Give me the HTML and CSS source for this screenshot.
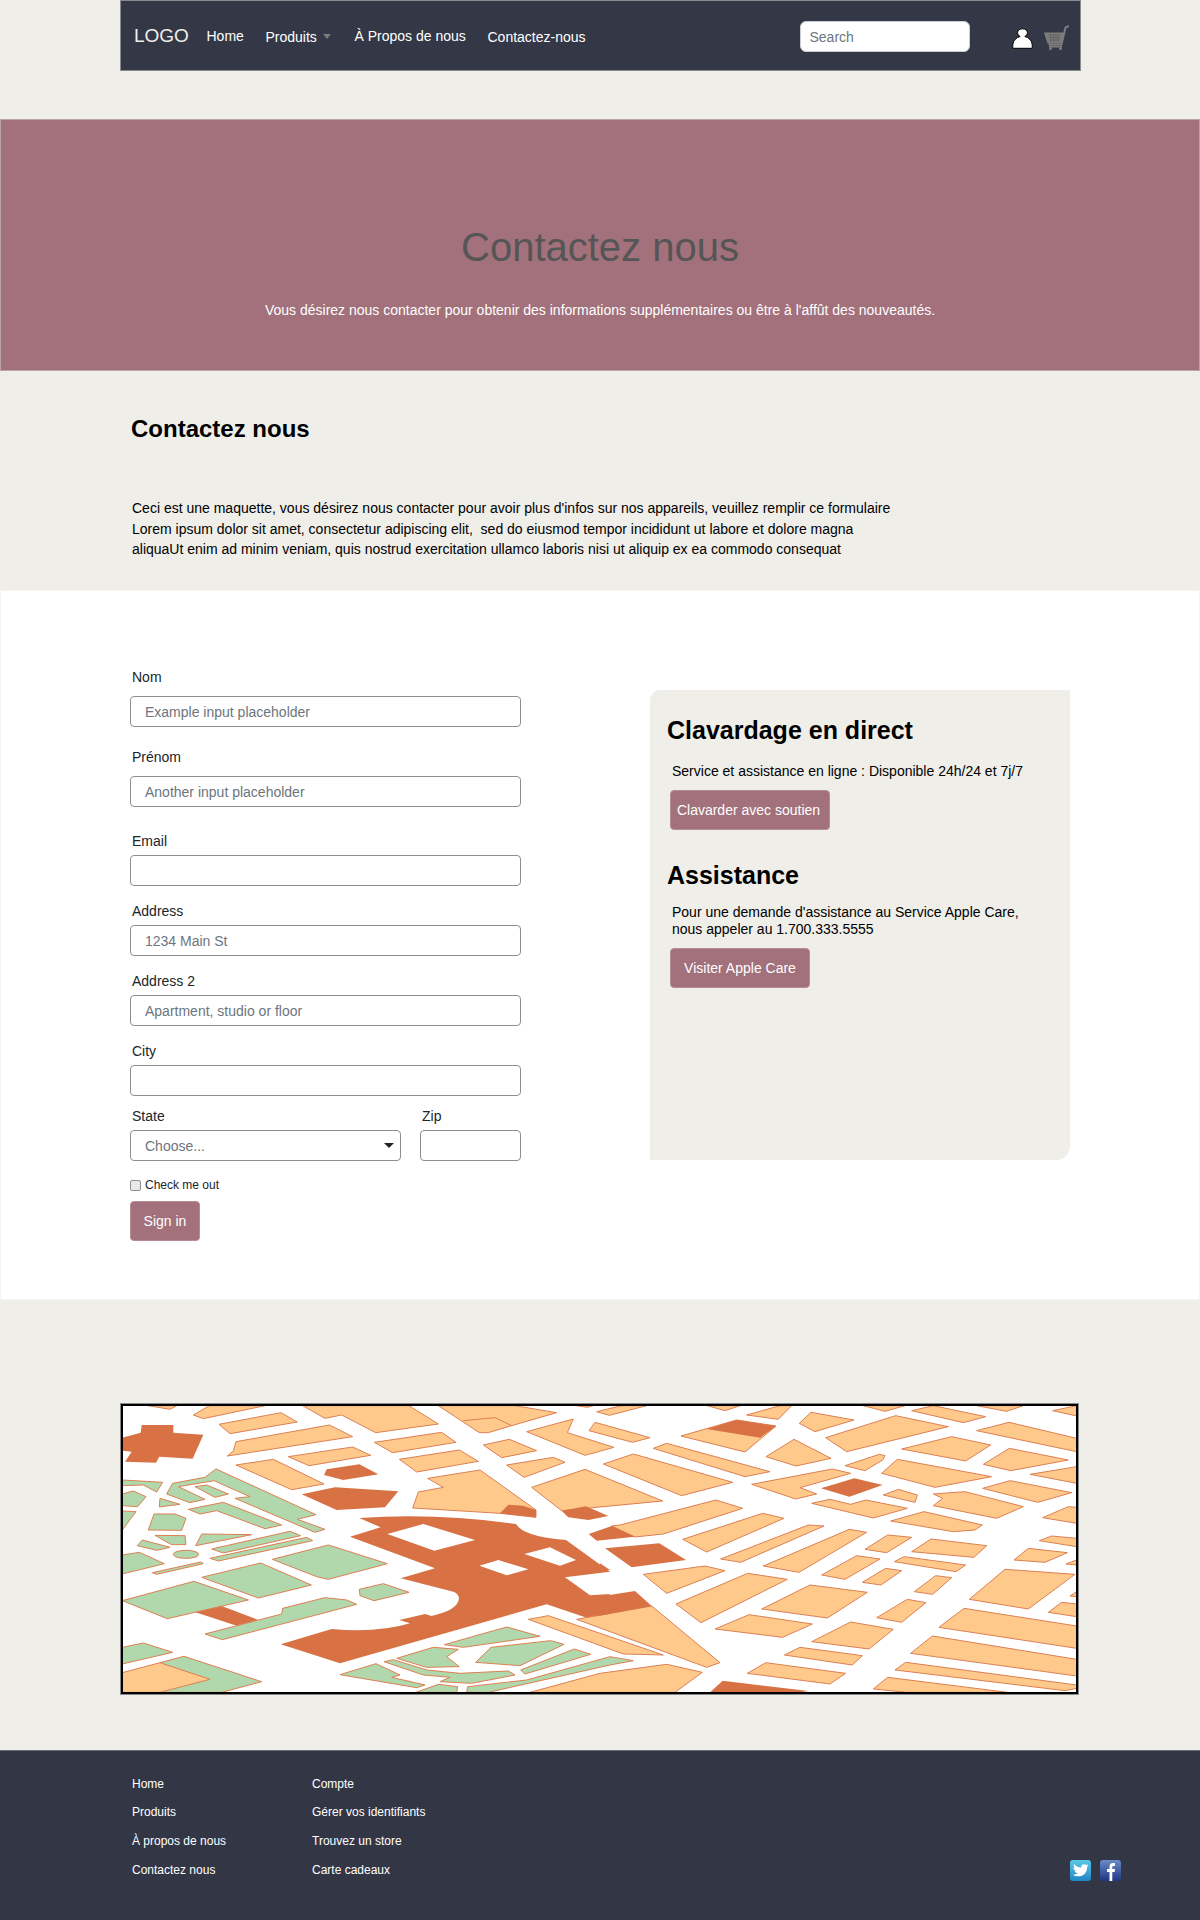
FILE: index.html
```html
<!DOCTYPE html>
<html lang="fr">
<head>
<meta charset="utf-8">
<title>Contactez nous</title>
<link rel="stylesheet" href="styles.css">
</head>
<body>
<header class="nav">
  <a class="logo">LOGO</a>
  <a class="link link-home">Home</a>
  <a class="link link-prod">Produits<span class="caret"></span></a>
  <a class="link link-about">À Propos de nous</a>
  <a class="link link-contact">Contactez-nous</a>
  <input class="search" type="text" placeholder="Search">
  <svg class="user" viewBox="0 0 21 21" width="21" height="21"><path d="M10.5 .8c3 0 4.900 1.600 4.900 3.900 0 1.800-1.100 3.100-2.600 3.800 3.900 1 6.800 3.600 7.300 7.500.2 1.500.2 3.100.1 4.300H.8C.7 19.100.7 17.500.9 16c.5-3.900 3.400-6.500 7.300-7.500C6.700 7.800 5.600 6.500 5.600 4.700 5.600 2.400 7.500 .8 10.500 .8z" fill="#fff" stroke="#000" stroke-width="1"/></svg>
  <svg class="cart" viewBox="0 0 25 25" width="25" height="25"><path d="M25 1l-3.500 1.500-4 17H4.500" fill="none" stroke="#7d7d7d" stroke-width="2"/><path d="M0 7.500h20L17 18.500H3.500z" fill="#7d7d7d"/><path d="M4 10h13M4.500 12.500h12M5 15h11M7 9v8M9.500 9v8M12 9v8M14.500 9v8" stroke="#5c5c5c" stroke-width=".7"/><path d="M5 21.500h13" stroke="#7d7d7d" stroke-width="2"/><circle cx="6.500" cy="23.500" r="1.500" fill="#7d7d7d"/><circle cx="16.500" cy="23.500" r="1.500" fill="#7d7d7d"/></svg>
</header>

<section class="hero">
  <h1 class="hero-title">Contactez nous</h1>
  <p class="hero-sub">Vous désirez nous contacter pour obtenir des informations supplémentaires ou être à l'affût des nouveautés.</p>
</section>

<section class="intro">
  <h2 class="intro-title">Contactez nous</h2>
  <p class="intro-text">Ceci est une maquette, vous désirez nous contacter pour avoir plus d'infos sur nos appareils, veuillez remplir ce formulaire<br>Lorem ipsum dolor sit amet, consectetur adipiscing elit,&nbsp; sed do eiusmod tempor incididunt ut labore et dolore magna<br>aliquaUt enim ad minim veniam, quis nostrud exercitation ullamco laboris nisi ut aliquip ex ea commodo consequat</p>
</section>

<section class="contact">
  <form class="form">
    <div class="field field-a"><label>Nom</label><input class="input" placeholder="Example input placeholder"></div>
    <div class="field field-b"><label>Prénom</label><input class="input" placeholder="Another input placeholder"></div>
    <div class="field"><label>Email</label><input class="input"></div>
    <div class="field"><label>Address</label><input class="input" placeholder="1234 Main St"></div>
    <div class="field"><label>Address 2</label><input class="input" placeholder="Apartment, studio or floor"></div>
    <div class="field field-c"><label>City</label><input class="input"></div>
    <div class="row">
      <div class="field state"><label>State</label><div class="select"><span>Choose...</span><i class="arrow"></i></div></div>
      <div class="field zip"><label>Zip</label><input class="input"></div>
    </div>
    <div class="check"><span class="box"></span><span>Check me out</span></div>
    <button class="btn btn-sign" type="button">Sign in</button>
  </form>
  <aside class="panel">
    <h3 class="panel-title">Clavardage en direct</h3>
    <p class="panel-text">Service et assistance en ligne : Disponible 24h/24 et 7j/7</p>
    <button class="btn btn-chat" type="button">Clavarder avec soutien</button>
    <h3 class="panel-title panel-second">Assistance</h3>
    <p class="panel-text panel-text-2">Pour une demande d'assistance au Service Apple Care,<br>nous appeler au 1.700.333.5555</p>
    <button class="btn btn-care" type="button">Visiter Apple Care</button>
  </aside>
</section>

<section class="map-wrap">
  <svg class="map" viewBox="123 1406 953 286" preserveAspectRatio="none">
    <g transform="translate(110 1390) scale(.33333)">
      <g class="o">
        <polygon points="115,47 180,58 200,47"/>
        <polygon points="250,75 280,86 465,47 298,47"/>
        <polygon points="327,103 513,68 562,96 360,131"/>
        <polygon points="578,47 645,85 695,75 797,128 985,102 897,47"/>
        <polygon points="352,198 370,183 378,155 658,105 728,140"/>
        <polygon points="535,200 728,171 782,196 597,227"/>
        <polygon points="793,157 995,127 1038,157 848,188"/>
        <polygon points="868,208 1048,180 1105,214 920,246"/>
        <polygon points="985,47 1108,128 1135,128 1205,107 1340,68 1215,47"/>
        <polyline points="1060,92 1155,83 1205,107"/>
        <polygon points="1120,165 1198,148 1280,182 1175,203"/>
        <polygon points="1190,225 1330,202 1365,217 1242,262"/>
        <polygon points="1400,47 1432,52 1450,47"/>
        <polygon points="378,225 490,208 642,282 545,299"/>
        <polygon points="908,354 925,306 1000,292 953,265 1110,240 1278,360 1278,382 1170,370"/>
      </g>
      <g class="d">
        <polygon points="1170,370 1195,344 1240,347 1278,360 1278,382"/>
        <polygon points="37,143 92,128 95,105 190,105 190,128 280,134 248,206 148,200 138,218 45,215 65,185 37,182"/>
        <polygon points="642,255 650,238 748,223 805,253 700,270"/>
        <polygon points="575,313 675,292 865,304 825,352 680,360"/>
        <polygon points="252,665 335,648 445,690 380,707"/>
        <path fill-rule="evenodd" d="M748,384 Q980,368 1218,402 Q1240,440 1368,450 L1500,545 L1500,680 L1430,683 L1310,643 L690,820 L512,763 L665,717 Q800,730 900,700 L868,690 L945,672 L965,678 Q1045,660 1047,625 Q1045,610 1030,605 L872,565 L975,535 L720,440 L812,412 Z M832,432 L940,402 L1095,450 L973,482 Z M1108,527 L1165,510 L1255,538 L1190,556 Z M1243,492 L1320,472 L1398,510 L1350,527 Z M1365,562 L1500,545 L1500,612 L1440,616 Z"/>
      </g>
      <g class="g">
        <polygon points="37,270 158,277 140,306 100,285 37,287"/>
        <polygon points="37,312 70,303 108,320 83,350 37,347"/>
        <polygon points="37,363 78,365 37,420"/>
        <polygon points="150,325 210,343 148,351"/>
        <polygon points="170,312 188,280 285,262 318,237 618,374 562,388 645,418 615,427 375,325 420,320 312,272 205,290 285,328 240,338"/>
        <polygon points="255,290 290,285 355,312 315,322"/>
        <polygon points="235,358 340,337 515,405 465,416 320,362 270,372"/>
        <polygon points="115,420 132,372 195,372 228,385 215,421"/>
        <polygon points="135,436 225,437 228,464 185,464"/>
        <polygon points="82,467 97,450 180,472 140,481"/>
        <polygon points="257,467 275,432 425,434"/>
        <polygon points="305,477 540,424 572,437 340,489"/>
        <polygon points="300,505 590,442 608,452 325,513"/>
        <ellipse cx="228" cy="493" rx="38" ry="12"/>
        <polygon points="37,495 88,487 163,521 37,552"/>
        <polygon points="127,548 272,516 280,521 140,553"/>
        <polygon points="275,562 452,519 604,585 445,624"/>
        <polygon points="487,508 655,465 832,521 655,568 620,560"/>
        <polygon points="37,632 252,574 415,630 172,686"/>
        <polygon points="285,732 515,672 518,655 645,623 710,630 740,643 337,749"/>
        <polygon points="748,598 820,581 897,607 792,632 750,617"/>
        <polygon points="37,772 100,759 188,787 37,822"/>
        <polygon points="150,818 222,799 455,875 335,907 150,907"/>
        <polygon points="690,854 798,821 870,855 845,862 945,885 920,893"/>
        <polygon points="860,805 970,772 1045,778 1010,800 1048,830 950,832"/>
        <polygon points="822,815 850,809 950,840 1050,850 1195,843 1215,855 1085,880 990,875 1020,862 940,855"/>
        <polygon points="1003,764 1190,711 1290,739 1060,772"/>
        <polygon points="1097,817 1143,772 1322,752 1362,763 1230,827"/>
        <polygon points="1232,840 1393,777 1442,793 1245,852"/>
        <polygon points="1070,907 1073,890 1250,870 1500,800 1570,812 1500,825 1135,907"/>
        <polygon points="918,907 985,883 1043,890 1040,907"/>
      </g>
      <g class="o"><polygon points="37,848 150,818 300,868 150,907 37,907"/></g>
    </g>
    <g transform="translate(600 1390) scale(.33333)">
      <g class="o">
        <polygon points="-10,65 65,47 140,47 28,76"/>
        <polygon points="322,47 375,62 420,47"/>
        <polygon points="440,75 535,88 575,47 540,47"/>
        <polygon points="598,100 633,67 762,90 645,125"/>
        <polygon points="243,138 410,90 528,108 435,186"/>
        <polygon points="-33,122 -15,97 150,143 98,157"/>
        <polygon points="-220,125 -80,87 -98,128 42,172 -45,196"/>
        <polygon points="160,175 200,160 510,245 435,260"/>
        <polygon points="10,222 100,192 398,277 245,317"/>
        <polygon points="498,200 582,148 693,205 588,228"/>
        <polygon points="677,143 887,77 1045,110 740,185"/>
        <polygon points="905,177 1055,140 1172,165 1097,213"/>
        <polygon points="1130,122 1227,97 1430,145 1430,185"/>
        <polygon points="1150,223 1228,175 1405,210 1232,242"/>
        <polygon points="735,227 838,193 855,197 848,210 795,242"/>
        <polygon points="845,250 892,208 1175,260 1005,292"/>
        <polygon points="1290,253 1430,230 1430,280"/>
        <polygon points="1148,295 1230,272 1415,308 1313,337"/>
        <polygon points="455,283 697,237 752,250 600,293 650,312 587,327"/>
        <polygon points="790,47 855,64 915,47"/>
        <polygon points="935,62 1000,47 1157,80 1090,98"/>
        <polygon points="1130,47 1220,64 1270,47"/>
        <polygon points="1358,62 1430,47 1430,78"/>
        <polygon points="850,315 895,298 952,315 945,337"/>
        <polygon points="635,340 690,328 752,343 798,330 922,355 820,384"/>
        <polygon points="1000,312 1095,305 1270,350 1190,385 1000,347 1028,325"/>
        <polygon points="1328,383 1405,350 1430,352 1430,400"/>
        <polygon points="872,393 972,365 1147,405 1125,420 1060,425"/>
        <polygon points="1318,452 1355,438 1430,445 1430,470"/>
        <polygon points="-205,292 -45,238 188,333 -115,362"/>
        <polygon points="35,408 60,405 348,330 428,355 190,432 105,441"/>
        <polygon points="248,448 488,370 552,385 320,486"/>
        <polygon points="362,507 625,405 672,408 422,517"/>
        <polygon points="490,528 748,418 800,427 597,547"/>
        <polygon points="130,553 315,528 375,542 200,610"/>
        <polygon points="228,642 443,550 562,568 303,698"/>
        <polygon points="485,657 630,585 802,607 682,684"/>
        <polygon points="795,478 863,435 935,442 860,488"/>
        <polygon points="665,555 770,497 840,507 735,568"/>
        <polygon points="787,577 857,535 905,542 843,585"/>
        <polygon points="935,485 993,447 1160,467 1122,502"/>
        <polygon points="883,515 912,500 1097,525 1068,545"/>
        <polygon points="943,605 1007,557 1055,563 998,613"/>
        <polygon points="830,683 922,628 978,638 905,697"/>
        <polygon points="345,717 447,674 637,702 548,742"/>
        <polygon points="635,755 752,696 880,718 807,777"/>
        <polygon points="553,795 600,772 787,797 757,825"/>
        <polygon points="442,850 497,818 737,850 690,882"/>
        <polygon points="1108,628 1215,538 1425,553 1285,657"/>
        <polygon points="1242,510 1285,475 1402,488 1335,517"/>
        <polygon points="1398,522 1430,510 1430,525"/>
        <polygon points="1410,618 1430,605 1430,620"/>
        <polygon points="1345,667 1385,637 1430,642 1430,680"/>
        <polygon points="1017,712 1092,655 1430,708 1430,775"/>
        <polygon points="932,790 997,738 1430,808 1430,858"/>
        <polygon points="885,840 917,817 1430,885 1430,895 1395,902"/>
        <polygon points="820,897 863,862 1222,907 920,907"/>
        <polygon points="-70,688 155,648 360,818 320,832"/>
        <polygon points="-215,688 -155,677 190,795 70,792"/>
        <polygon points="-210,907 0,850 200,823 307,847 225,907"/>
      </g>
      <g class="d">
        <polygon points="320,117 410,90 528,108 480,143"/>
        <polygon points="663,295 763,265 848,285 748,320"/>
        <polygon points="-115,362 -42,349 25,378 -35,390 -95,382"/>
        <polygon points="-34,432 35,408 105,440 -10,452"/>
        <polygon points="15,475 178,460 258,510 95,532"/>
        <polygon points="0,520 30,540 0,547"/>
        <polygon points="-5,620 105,603 155,648 -5,678"/>
        <polygon points="330,907 368,872 625,903 600,907"/>
      </g>
    </g>
  </svg>
</section>

<footer class="footer">
  <ul class="foot-col foot-one"><li>Home</li><li>Produits</li><li>À propos de nous</li><li>Contactez nous</li></ul>
  <ul class="foot-col foot-two"><li>Compte</li><li>Gérer vos identifiants</li><li>Trouvez un store</li><li>Carte cadeaux</li></ul>
  <div class="social">
    <svg class="soc" viewBox="0 0 21 21" width="21" height="21"><defs><linearGradient id="tw" x1="0" y1="0" x2="0" y2="1"><stop offset="0" stop-color="#5cc9e6"/><stop offset="1" stop-color="#1f86c4"/></linearGradient><linearGradient id="fb" x1="0" y1="0" x2="0" y2="1"><stop offset="0" stop-color="#6a8bc9"/><stop offset="1" stop-color="#1f3681"/></linearGradient></defs><rect width="21" height="21" rx="3" fill="url(#tw)"/><path d="M18 5.300c-.6.300-1.200.5-1.800.5.700-.4 1.100-1 1.400-1.700-.6.400-1.300.6-2 .8-1.500-1.600-4.900-.6-4.300 2.700C8.700 7.400 5.900 6.300 4 3.900c-.8 1.500-.4 3.200.9 4.200-.5 0-1-.1-1.400-.4 0 1.600 1.100 2.900 2.600 3.300-.5.100-1 .1-1.400.1.400 1.300 1.600 2.200 3 2.200-1.500 1.100-3.200 1.600-5 1.400 6.500 4 14.800.2 14.300-7.500.6-.5 1.300-1.100 1-2.100z" fill="#fff"/></svg>
    <svg class="soc" viewBox="0 0 21 21" width="21" height="21"><rect width="21" height="21" rx="3" fill="url(#fb)"/><path d="M9.500 21V12H7V9h2.500V6.500C9.500 4 11 3 13 3c1 0 1.800.1 2 .1V6h-1.400c-1 0-1.300.5-1.300 1.300V9h2.800l-.4 3h-2.400v9z" fill="#fff"/></svg>
  </div>
</footer>
</body>
</html>
```
FILE: styles.css
```css
* { box-sizing: border-box; }
html, body { margin: 0; padding: 0; }
body {
  width: 1200px;
  height: 1920px;
  overflow: hidden;
  background: #efeee9;
  color: #000;
  font-family: "Liberation Sans", Arial, sans-serif;
  font-size: 14px;
}

/* nav */
.nav {
  display: flex;
  align-items: center;
  width: 961px;
  height: 71px;
  margin-left: 120px;
  padding-left: 13px;
  background: #343746;
  border: 1px solid #8a8b90;
  color: #fff;
}
.nav > * { flex: none; }
.logo { width: 59px; font-size: 19px; color: #efeee9; margin-right: 13.500px; }
.link { font-size: 14px; line-height: 20px; white-space: nowrap; }
.link-home { width: 59px; margin-top: 1px; }
.link-prod { width: 89px; margin-top: 3px; }
.link-about { width: 133px; margin-top: 1px; }
.link-contact { width: 98px; margin-top: 3px; }
.caret {
  display: inline-block;
  margin-left: 6px;
  vertical-align: 3px;
  border-top: 5px solid #7c7c7c;
  border-left: 4.500px solid transparent;
  border-right: 4.500px solid transparent;
}
.search {
  width: 170px;
  height: 31px;
  margin-left: 214px;
  margin-top: 2px;
  padding: 0 9px;
  border: 1px solid #c9ced4;
  border-radius: 6px;
  background: #fff;
  font: 14px "Liberation Sans", Arial, sans-serif;
}
.search::placeholder, .input::placeholder { color: #6c757d; opacity: 1; }
.user { margin-left: 42px; margin-top: 6px; }
.cart { margin-left: 11px; margin-top: 3px; }

/* hero */
.hero {
  height: 252px;
  margin-top: 48px;
  padding-top: 100.500px;
  background: #a2717b;
  border: 1px solid #b9a6a4;
  text-align: center;
}
.hero-title {
  margin: 0;
  font-size: 40px;
  font-weight: 400;
  line-height: 52px;
  color: #555556;
}
.hero-sub {
  margin: 27px 0 0;
  font-size: 14px;
  line-height: 20px;
  color: #fff;
}

/* intro */
.intro { height: 219px; padding: 43px 0 0 131px; }
.intro-title { margin: 0; font-size: 24px; line-height: 30px; font-weight: 700; }
.intro-text { margin: 54px 0 0 1px; font-size: 14px; line-height: 20.700px; }

/* contact */
.contact {
  display: flex;
  align-items: flex-start;
  height: 710px;
  padding: 76px 0 0 129px;
  background: #fff;
  border: 1px solid #f5f5f2;
}
.form { width: 391px; flex: none; }
.field { margin-bottom: 15px; }
.field label {
  display: block;
  margin: 0 0 4px 2px;
  line-height: 20px;
  color: #212529;
}
.field-a { margin-bottom: 20px; }
.field-a label { margin-bottom: 9px; }
.field-b { margin-bottom: 24px; }
.field-b label { margin-bottom: 9px; }
.field-c { margin-bottom: 10px; }
.input {
  display: block;
  width: 100%;
  height: 31px;
  padding: 0 14px;
  background: #fff;
  border: 1px solid #8e8e8e;
  border-radius: 4px;
  font: 14px "Liberation Sans", Arial, sans-serif;
}
.row { display: flex; gap: 19px; }
.row .field { margin-bottom: 0; }
.state { width: 271px; }
.zip { width: 101px; }
.select {
  display: flex;
  align-items: center;
  justify-content: space-between;
  height: 31px;
  padding: 0 6px 0 14px;
  border: 1px solid #8e8e8e;
  border-radius: 4px;
  color: #6c757d;
}
.arrow {
  border-top: 5px solid #212529;
  border-left: 5px solid transparent;
  border-right: 5px solid transparent;
}
.check {
  display: flex;
  align-items: center;
  gap: 4px;
  margin-top: 18px;
  font-size: 12px;
  line-height: 13px;
  color: #212529;
}
.box {
  width: 11px;
  height: 11px;
  background: #e9e9e7;
  border: 1px solid #8f8f8f;
  border-radius: 2px;
}
.btn {
  display: block;
  height: 40px;
  padding: 0;
  background: #a2717b;
  border: 1px solid #b58c94;
  border-radius: 4px;
  color: #fff;
  font: 14px "Liberation Sans", Arial, sans-serif;
  text-align: center;
}
.btn-sign { width: 70px; margin-top: 9px; padding-bottom: 1px; }
.btn-chat { width: 160px; margin: 10px 0 0 20px; padding-right: 3px; }
.btn-care { width: 140px; margin: 10px 0 0 20px; }

.panel {
  width: 420px;
  height: 470px;
  margin: 23px 0 0 129px;
  padding-top: 25px;
  background: #efeee9;
  border-radius: 10px 0 14px 0;
}
.panel-title { margin: 0 0 0 17px; font-size: 25px; line-height: 30px; font-weight: 700; }
.panel-second { margin-top: 30px; }
.panel-text { margin: 17.500px 0 0 22px; font-size: 14px; line-height: 17px; }
.panel-text-2 { margin-top: 14px; }

/* map */
.map-wrap { height: 450px; padding: 103px 0 0 120px; }
.map {
  display: block;
  width: 959px;
  height: 292px;
  background: #fff;
  border: 3px solid #000;
  outline: 1px solid #8a8a8a;
  outline-offset: -1px;
}
.o polygon, .o polyline { fill: #fec98a; stroke: #dc7f52; stroke-width: 3; }
.o polyline { fill: none; }
.g polygon, .g ellipse { fill: #b1d8ac; stroke: #dc7f52; stroke-width: 3; }
.d polygon, .d path { fill: #d87245; }

/* footer */
.footer {
  display: flex;
  height: 170px;
  padding: 18.500px 0 0 132px;
  background: #333645;
  border-top: 1px solid #6c6d76;
  color: #fff;
}
.foot-col { margin: 0; padding: 0; list-style: none; font-size: 12px; }
.foot-col li { height: 28.800px; line-height: 28.800px; }
.foot-one { width: 180px; }
.foot-two { width: 758px; }
.social { display: flex; gap: 9px; margin-top: 90.500px; }
```
